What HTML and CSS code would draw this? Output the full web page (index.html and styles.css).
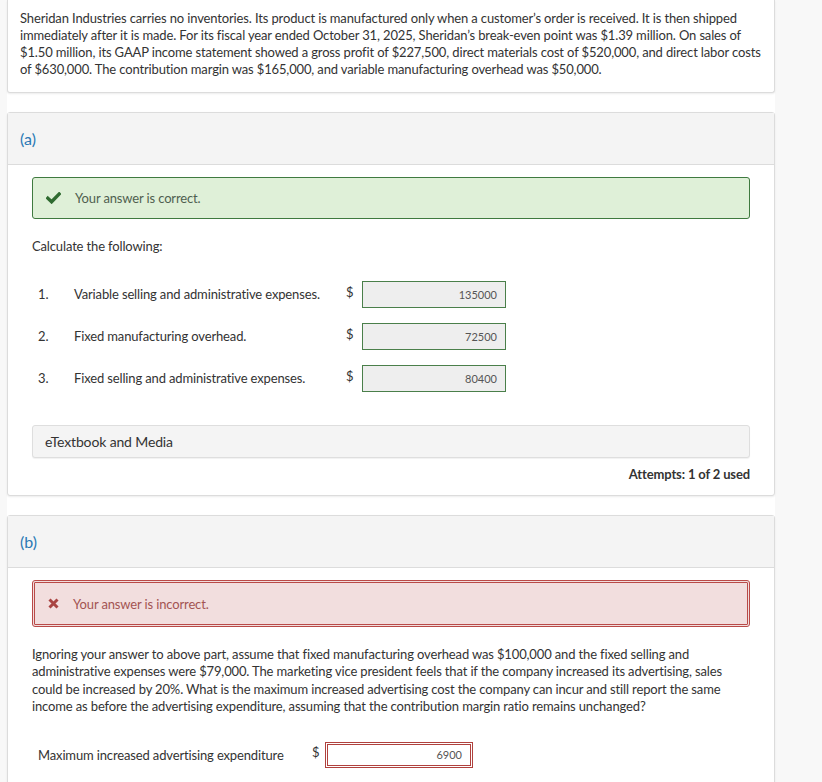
FILE: index.html
```html
<!DOCTYPE html>
<html>
<head>
<meta charset="utf-8">
<link rel="stylesheet" href="styles.css">
</head>
<body>
<div class="main">
  <div class="card intro">
    <p>Sheridan Industries carries no inventories. Its product is manufactured only when a customer’s order is received. It is then shipped immediately after it is made. For its fiscal year ended October 31, 2025, Sheridan’s break-even point was $1.39 million. On sales of $1.50 million, its GAAP income statement showed a gross profit of $227,500, direct materials cost of $520,000, and direct labor costs of $630,000. The contribution margin was $165,000, and variable manufacturing overhead was $50,000.</p>
  </div>

  <div class="card part">
    <div class="part-head">(a)</div>
    <div class="part-body">
      <div class="alert alert-ok">
        <svg class="ico-check" width="15" height="12" viewBox="0 0 15 12"><polyline points="1.8,6.2 5.6,9.8 13.2,2" fill="none" stroke="#2f6b30" stroke-width="3.4" stroke-linecap="square"/></svg>
        <span>Your answer is correct.</span>
      </div>
      <p class="lead">Calculate the following:</p>
      <div class="qgrid">
        <span class="num">1.</span><span class="lbl">Variable selling and administrative expenses.</span><span class="cur">$</span><span class="inp ok">135000</span>
        <span class="num">2.</span><span class="lbl">Fixed manufacturing overhead.</span><span class="cur">$</span><span class="inp ok">72500</span>
        <span class="num">3.</span><span class="lbl">Fixed selling and administrative expenses.</span><span class="cur">$</span><span class="inp ok">80400</span>
      </div>
      <div class="media">eTextbook and Media</div>
      <div class="attempts">Attempts: 1 of 2 used</div>
    </div>
  </div>

  <div class="card part last">
    <div class="part-head">(b)</div>
    <div class="part-body">
      <div class="alert alert-bad">
        <svg class="ico-x" width="11" height="11" viewBox="0 0 11 11"><path d="M1.5 1.5 L9.5 9.5 M9.5 1.5 L1.5 9.5" fill="none" stroke="#a94442" stroke-width="3"/></svg>
        <span>Your answer is incorrect.</span>
      </div>
      <p class="qtext">Ignoring your answer to above part, assume that fixed manufacturing overhead was $100,000 and the fixed selling and administrative expenses were $79,000. The marketing vice president feels that if the company increased its advertising, sales could be increased by 20%. What is the maximum increased advertising cost the company can incur and still report the same income as before the advertising expenditure, assuming that the contribution margin ratio remains unchanged?</p>
      <div class="brow">
        <span class="lbl2">Maximum increased advertising expenditure</span><span class="cur2">$</span><span class="inp bad">6900</span>
      </div>
    </div>
  </div>
</div>
</body>
</html>
```

FILE: styles.css
```css
html, body {
  margin: 0;
  padding: 0;
}
body {
  background: #f8f8f8;
  font-family: Lato, "Open Sans", "Liberation Sans", sans-serif;
  color: #333;
  font-size: 13px;
  letter-spacing: -0.14px;
  height: 782px;
  overflow: hidden;
}
.main {
  width: 768px;
  margin-left: 7px;
  background: #fff;
  min-height: 782px;
  display: flex;
  flex-direction: column;
  gap: 19px;
}
.card {
  border: 1px solid #dcdcdc;
  border-radius: 3px;
  background: #fff;
  box-shadow: 0 1px 2px rgba(0,0,0,0.08);
}
.intro {
  border-top: 0;
  border-top-left-radius: 0;
  border-top-right-radius: 0;
  padding: 10px 12px 14px 12px;
}
.intro p {
  margin: 0;
  line-height: 17px;
  font-size: 13px;
}
.part-head {
  background: #f4f4f4;
  border-bottom: 1px solid #dcdcdc;
  height: 51px;
  display: flex;
  align-items: center;
  padding-left: 12px;
  font-size: 16px;
  letter-spacing: 0;
  color: #2a79b5;
}
.part-body {
  padding: 12px 24px 12px 24px;
}
.last .part-body {
  padding-bottom: 60px;
}
.alert {
  display: flex;
  align-items: center;
  border-radius: 3px;
}
.alert-ok {
  height: 40px;
  background: #dff0d8;
  border: 1px solid #3f7a3f;
  color: #4f5f4f;
}
.ico-check {
  margin-left: 13px;
  margin-right: 14px;
}
.alert-bad {
  height: 41px;
  background: #f2dede;
  border: 3px double #b94a48;
  color: #a35452;
}
.ico-x {
  margin-left: 13px;
  margin-right: 14px;
}
.lead {
  margin: 19px 0 0 0;
  line-height: 17px;
}
.qgrid {
  margin: 26px 0 0 6px;
  display: grid;
  grid-template-columns: 36px 272px 16px 144px;
  grid-auto-rows: 27px;
  row-gap: 15px;
  align-items: center;
}
.num, .lbl {
  position: relative;
  top: -1px;
}
.cur {
  position: relative;
  top: -3px;
}
.inp {
  height: 27px;
  box-sizing: border-box;
  display: flex;
  align-items: center;
  justify-content: flex-end;
  padding-right: 8px;
  font-size: 11px;
  letter-spacing: 0;
  color: #555;
}
.inp.ok {
  background: #eeeeee;
  border: 1px solid #4a7f4a;
}
.inp.bad {
  width: 148px;
  height: 26px;
  background: #fff;
  border: 3px double #b0413e;
}
.media {
  margin-top: 33px;
  height: 33px;
  box-sizing: border-box;
  background: #f4f4f4;
  border: 1px solid #dedede;
  border-radius: 3px;
  box-shadow: 0 1px 1px rgba(0,0,0,0.06);
  display: flex;
  align-items: center;
  padding-left: 12px;
  font-size: 14px;
  color: #333;
}
.attempts {
  margin-top: 8px;
  text-align: right;
  font-weight: bold;
  line-height: 17px;
  color: #333;
}
.qtext {
  margin: 19px 0 0 0;
  line-height: 17.4px;
}
.brow {
  margin: 26px 0 0 6px;
  display: flex;
  align-items: center;
}
.lbl2 {
  width: 274px;
}
.cur2 {
  width: 13px;
  position: relative;
  top: -3px;
}
```
